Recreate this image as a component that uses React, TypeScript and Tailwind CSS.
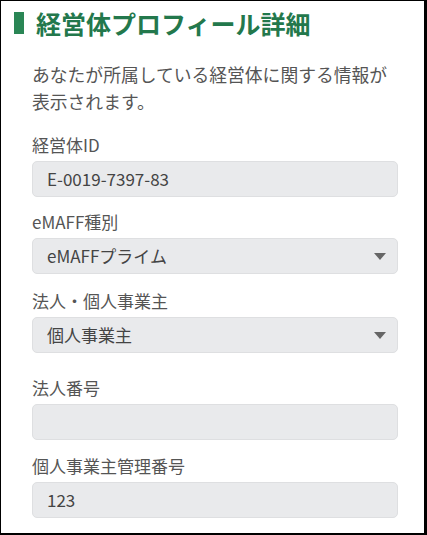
import { ReactNode } from "react";

const font = {
  fontFamily: '"Noto Sans CJK JP", "Noto Sans", sans-serif',
};

const Field = ({ label, children, className = "" }: { label: string; children: ReactNode; className?: string }) => (
  <div className={`flex flex-col ${className}`}>
    <label className="text-[17px] leading-6 text-[#555] mb-1">{label}</label>
    {children}
  </div>
);

const TextBox = ({ value }: { value?: string }) => (
  <div className="h-[36px] w-full rounded-[5px] border border-[#dedfe1] bg-[#e9eaec] px-[14px] flex items-center text-[17px] text-[#444]">
    {value}
  </div>
);

const SelectBox = ({ value }: { value: string }) => (
  <div className="h-[36px] w-full rounded-[5px] border border-[#dedfe1] bg-[#e9eaec] pl-[14px] pr-[11px] flex items-center justify-between text-[17px] text-[#444]">
    <span>{value}</span>
    <svg width="12" height="7" viewBox="0 0 12 7">
      <path d="M0 0 L12 0 L6 7 Z" fill="#666" />
    </svg>
  </div>
);

export default function App() {
  return (
    <div
      style={font}
      className="h-[535px] w-[427px] bg-white border-black border-t border-l border-r-[3px] border-b-2 overflow-hidden"
    >
      <h1 className="flex items-center gap-[12px] pl-[13px] pt-[9px] text-[25px] leading-[26px] font-bold text-[#23784c]">
        <span className="inline-block w-[10px] h-[22px] bg-[#2a8655]" />
        経営体プロフィール詳細
      </h1>
      <div className="pl-[31px] pr-[26px]">
        <p className="mt-[25px] text-[17.8px] leading-[27px] text-[#555]">
          あなたが所属している経営体に関する情報が
          <br />
          表示されます。
        </p>
        <div className="mt-[18px] flex flex-col">
          <Field label="経営体ID">
            <TextBox value="E-0019-7397-83" />
          </Field>
          <Field label="eMAFF種別" className="mt-[13px]">
            <SelectBox value="eMAFFプライム" />
          </Field>
          <Field label="法人・個人事業主" className="mt-[15px]">
            <SelectBox value="個人事業主" />
          </Field>
          <Field label="法人番号" className="mt-[23px]">
            <TextBox />
          </Field>
          <Field label="個人事業主管理番号" className="mt-[14px]">
            <TextBox value="123" />
          </Field>
        </div>
      </div>
    </div>
  );
}
